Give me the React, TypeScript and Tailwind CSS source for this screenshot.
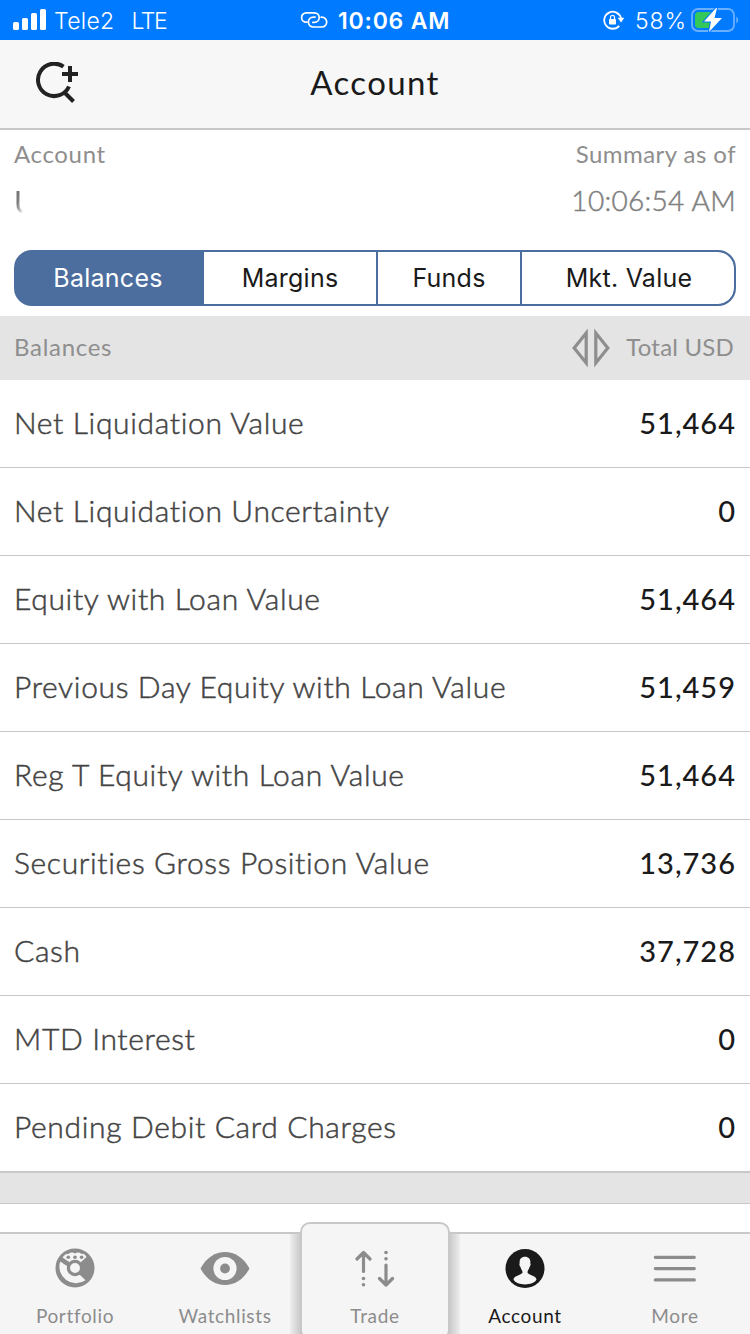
import type { ReactNode } from 'react';
import { clsx } from 'clsx';

interface BalanceRow {
  label: string;
  value: string;
}

const ROWS: BalanceRow[] = [
  { label: 'Net Liquidation Value', value: '51,464' },
  { label: 'Net Liquidation Uncertainty', value: '0' },
  { label: 'Equity with Loan Value', value: '51,464' },
  { label: 'Previous Day Equity with Loan Value', value: '51,459' },
  { label: 'Reg T Equity with Loan Value', value: '51,464' },
  { label: 'Securities Gross Position Value', value: '13,736' },
  { label: 'Cash', value: '37,728' },
  { label: 'MTD Interest', value: '0' },
  { label: 'Pending Debit Card Charges', value: '0' },
];

function StatusBar() {
  return (
    <div className="relative flex h-10 shrink-0 items-center justify-between bg-[#007aff] pl-[13px] pr-[10px] font-['Inter',sans-serif] text-[23px] leading-10 text-white">
      <div className="flex items-center">
        <svg className="-mt-0.5 h-[21px] w-[33px]" viewBox="0 0 33 21" fill="currentColor">
          <rect x="0" y="13" width="6" height="8" rx="1.6" />
          <rect x="9" y="9" width="6" height="12" rx="1.6" />
          <rect x="18" y="4" width="6" height="17" rx="1.6" />
          <rect x="27" y="0" width="6" height="21" rx="1.6" />
        </svg>
        <span className="ml-2 mt-px font-light tracking-[0.3px]">Tele2</span>
        <span className="ml-[17px] mt-px font-light tracking-[-1.4px]">LTE</span>
      </div>

      <div className="absolute left-[300px] top-0 flex h-10 items-center">
        <svg className="h-[18px] w-7" viewBox="0 0 28 18" fill="none" stroke="currentColor" strokeWidth="1.7" strokeLinecap="round">
          <path d="M7 11.2H6.3A4.7 4.7 0 0 1 6.3 1.8H14.4A4.8 4.8 0 0 1 14.4 11.4H12.8" />
          <path d="M21.2 6.2H21.8A4.9 4.9 0 0 1 21.8 16H13.3A4.9 4.9 0 0 1 13.3 6.2H15" />
        </svg>
        <span className="ml-[10px] mt-px font-semibold tracking-[0.8px]">10:06 AM</span>
      </div>

      <div className="flex items-center">
        <svg className="h-5 w-[22px]" viewBox="0 0 22 20" fill="none" stroke="currentColor" strokeWidth="1.8">
          <path d="M16.2 15.8A8.5 8.5 0 1 1 18 8.2" />
          <path d="M14.7 7.8H21.3L18 12.4Z" fill="currentColor" stroke="none" />
          <rect x="6" y="9" width="7" height="5.5" rx="0.8" fill="currentColor" stroke="none" />
          <path d="M7.5 9V7.3A2 2 0 0 1 11.5 7.3V9" strokeWidth="1.2" />
        </svg>
        <span className="ml-[10px] mt-px font-light tracking-[0.9px]">58%</span>
        <svg className="ml-1 mr-px h-6 w-12" viewBox="0 0 48 24">
          <rect x="1" y="1" width="42" height="22" rx="6" fill="none" stroke="#6bb0ff" strokeWidth="1.8" />
          <path d="M45.3 8.5C47.8 10 47.8 14 45.3 15.5Z" fill="#6bb0ff" />
          <rect x="4" y="4" width="20" height="16" rx="3.5" fill="#34c759" />
          <path d="M25 0 13 13.5H20L18 24 31 10H23.5L26 0Z" fill="#fff" stroke="#007aff" strokeWidth="2" paintOrder="stroke" />
        </svg>
      </div>
    </div>
  );
}

function Header() {
  return (
    <header className="relative flex h-[90px] shrink-0 items-center justify-center border-b-2 border-[#c8c8c8] bg-[#f7f7f7]">
      <svg className="absolute left-[35px] top-[22px] h-11 w-11" viewBox="0 0 44 44" fill="none" stroke="#222" strokeWidth="4">
        <path d="M28.5 4.6A16.2 16.2 0 1 0 34 24.5" />
        <path d="M29.5 30.5 38.5 39.5" />
        <path d="M27 12H43M35 4V20" />
      </svg>
      <h1 className="-mt-0.5 text-[33px] tracking-[1.35px] text-[#1a1a1a]">Account</h1>
    </header>
  );
}

function SegmentedControl() {
  const segment = 'flex items-center justify-center pt-0.5';
  return (
    <div className="mx-[14px] flex h-14 overflow-hidden rounded-[18px] border-2 border-[#4c6e9e] bg-[#4c6e9e] font-['Inter',sans-serif] text-[25px] tracking-[0.25px] text-[#1a1a1a]">
      <div className={clsx(segment, 'w-[188px] pr-1 text-white')}>Balances</div>
      <div className={clsx(segment, 'w-[172px] bg-white')}>Margins</div>
      <div className={clsx(segment, 'w-[144px] border-l-2 border-[#4c6e9e] bg-white')}>Funds</div>
      <div className={clsx(segment, 'flex-1 rounded-r-2xl border-l-2 border-[#4c6e9e] bg-white pl-0.5')}>Mkt. Value</div>
    </div>
  );
}

function PortfolioIcon() {
  return (
    <svg className="h-10 w-10" viewBox="0 0 40 40" fill="none" stroke="currentColor">
      <circle cx="20" cy="20" r="19.5" fill="currentColor" stroke="none" />
      {/* Lower-left slice */}
      <path d="M5.2 13.5 13.5 19V22L18 27H25L30.5 32.2A16.6 16.6 0 0 1 5.2 13.5Z" fill="#f5f5f5" stroke="none" />
      {/* Scalloped top slice */}
      <path d="M7.5 9.5Q10.5 5 13.5 6Q16.5 3.5 20 5.4Q23.5 3.5 26.5 6Q29.5 5 31.5 9L25.5 14.5H15Z" fill="#f5f5f5" stroke="none" />
      <circle cx="20" cy="20" r="6.6" fill="#f5f5f5" strokeWidth="3.2" />
      <g fill="currentColor" stroke="none">
        <circle cx="13.3" cy="9.2" r="1.8" />
        <circle cx="20" cy="9.2" r="1.8" />
        <circle cx="26.6" cy="9.2" r="1.8" />
      </g>
    </svg>
  );
}

function WatchlistsIcon() {
  return (
    <svg className="h-10 w-[50px]" viewBox="0 0 50 40" fill="currentColor">
      <path d="M0.5 20.5C12 -1.5 38 -1.5 49.5 20.5C38 42.5 12 42.5 0.5 20.5Z" />
      <circle cx="25" cy="20.5" r="11.6" fill="#f5f5f5" />
      <circle cx="25" cy="20.5" r="4.9" />
    </svg>
  );
}

function TradeIcon() {
  return (
    <svg className="h-10 w-10" viewBox="0 0 40 40" fill="none" stroke="currentColor" strokeWidth="3.2" strokeLinecap="round" strokeLinejoin="round">
      <path d="M8.5 23.5V4.5M2 11 8.5 4.5 15 11M31 17V37M24.5 30.5 31 37 37.5 30.5" />
      <g fill="currentColor" stroke="none">
        <circle cx="8.5" cy="30.5" r="1.8" />
        <circle cx="8.5" cy="36.8" r="1.8" />
        <circle cx="31" cy="4.5" r="1.8" />
        <circle cx="31" cy="10.8" r="1.8" />
      </g>
    </svg>
  );
}

function AccountIcon() {
  return (
    <svg className="h-10 w-10" viewBox="0 0 40 40">
      <circle cx="20" cy="20.5" r="19.5" fill="#1a1a1a" />
      <path
        d="M20 8.7C16 8.7 14.2 11.5 14.7 15.5C14 15.7 14.6 18.5 15.5 19C16 21.5 17.6 22.5 17.5 24.5C17.3 27 8.6 27.5 8.5 31.5C12 38 28 38 31.5 31.5C31.4 27.5 22.7 27 22.5 24.5C22.4 22.5 24 21.5 24.5 19C25.4 18.5 26 15.7 25.3 15.5C25.8 11.5 24 8.7 20 8.7Z"
        fill="#f5f5f5"
      />
    </svg>
  );
}

function MoreIcon() {
  return (
    <svg className="h-10 w-11" viewBox="0 0 44 40" stroke="currentColor" strokeWidth="3.2" strokeLinecap="round">
      <path d="M2.3 9.3H41.3M2.3 20.6H41.3M2.3 31.9H41.3" />
    </svg>
  );
}

interface TabProps {
  label: string;
  icon: ReactNode;
  active?: boolean;
}

function Tab({ label, icon, active }: TabProps) {
  return (
    <div className={clsx('flex w-[150px] flex-col items-center pt-[14px]', active ? 'text-[#1a1a1a]' : 'text-[#8c8c8c]')}>
      {icon}
      <span className="mt-4 text-[19px] leading-6 tracking-[0.65px]">{label}</span>
    </div>
  );
}

function TabBar() {
  return (
    <nav className="flex h-[102px] shrink-0 border-t-2 border-[#c8c8c8] bg-[#f5f5f5]">
      <Tab label="Portfolio" icon={<PortfolioIcon />} />
      <Tab label="Watchlists" icon={<WatchlistsIcon />} />
      {/* Raised centre tab with a shadow on both sides */}
      <div className="relative w-[150px]">
        <div className="absolute -left-[10px] top-0 h-full w-3 bg-linear-to-r from-[#eeeeee] to-[#c4c4c4]" />
        <div className="absolute -right-[10px] top-0 h-full w-3 bg-linear-to-l from-[#eeeeee] to-[#c4c4c4]" />
        <div className="relative -mt-3 h-[118px] rounded-[10px] border-2 border-[#c8c8c8] bg-[#f5f5f5]">
          <div className="-ml-0.5 pt-[10px]">
            <Tab label="Trade" icon={<TradeIcon />} />
          </div>
        </div>
      </div>
      <Tab label="Account" icon={<AccountIcon />} active />
      <Tab label="More" icon={<MoreIcon />} />
    </nav>
  );
}

export default function App() {
  return (
    <div className="flex h-[1334px] w-[750px] flex-col overflow-hidden bg-white font-['Lato',sans-serif]">
      <StatusBar />
      <Header />

      {/* Account summary */}
      <div className="flex h-[120px] shrink-0 justify-between px-[14px] pt-2 text-[24px] leading-8 text-[#8e8e8e]">
        <div>
          <div className="tracking-[0.65px]">Account</div>
          <svg className="ml-px mt-5 h-6 w-3" viewBox="0 0 12 24">
            <defs>
              <linearGradient id="fade" x1="0" y1="0" x2="1" y2="1">
                <stop offset="0.2" stopColor="#777" />
                <stop offset="1" stopColor="#fff" />
              </linearGradient>
            </defs>
            <path d="M3 1V14Q3 21 8 22" fill="none" stroke="url(#fade)" strokeWidth="3" />
          </svg>
        </div>
        <div className="text-right">
          <div className="tracking-[0.45px]">Summary as of</div>
          <div className="mt-[14px] text-[28px] font-light tracking-[0.3px] text-[#808080] [-webkit-text-stroke:0.5px]">10:06:54 AM</div>
        </div>
      </div>

      <SegmentedControl />

      <div className="mt-[10px] flex h-16 shrink-0 items-center justify-between bg-[#e4e4e4] pl-[14px] pr-4 text-[24px] tracking-[0.7px] text-[#8e8e8e]">
        <span className="-mt-0.5">Balances</span>
        <div className="flex items-center">
          <svg className="mr-4 h-[42px] w-[38px]" viewBox="0 0 38 42" fill="none" stroke="currentColor" strokeWidth="3.2">
            <path d="M14.2 6V36L2.2 21ZM23.8 6V36L35.8 21Z" />
          </svg>
          <span className="-mt-0.5 tracking-[0.2px]">Total USD</span>
        </div>
      </div>

      {/* Balances */}
      <div className="shrink-0">
        {ROWS.map((row) => (
          <div key={row.label} className="flex h-[88px] items-center justify-between border-b border-[#c8c8c8] px-[14px] pb-0.5">
            <span className="text-[30px] font-light tracking-[0.65px] text-[#444] [-webkit-text-stroke:0.5px]">{row.label}</span>
            <span className="text-[29px] font-medium tracking-[1px] text-[#1a1a1a]">{row.value}</span>
          </div>
        ))}
      </div>
      <div className="h-8 shrink-0 border-y border-[#c8c8c8] bg-[#e4e4e4]" />
      <div className="flex-1" />

      <TabBar />
    </div>
  );
}
